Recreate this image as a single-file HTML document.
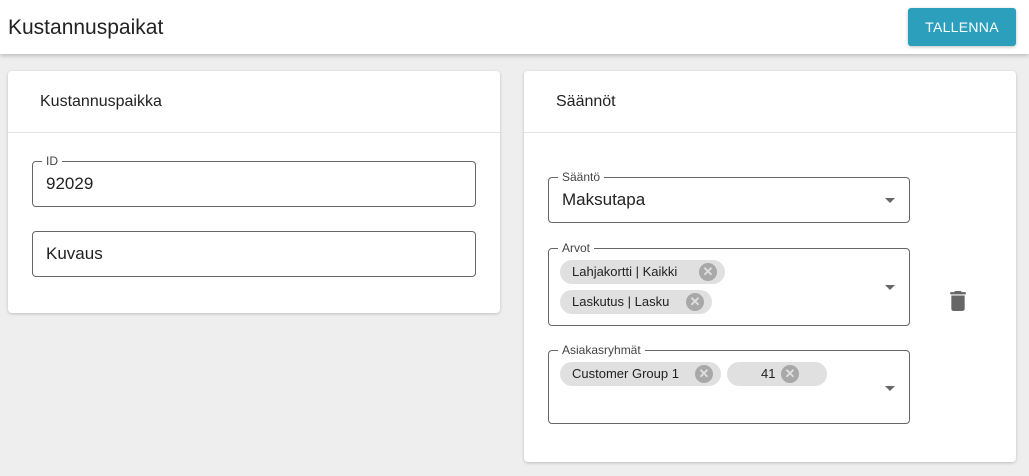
<!DOCTYPE html>
<html><head><meta charset="utf-8"><style>
*{box-sizing:border-box;margin:0;padding:0}
body{width:1029px;height:476px;background:#eeeeee;font-family:"Liberation Sans",sans-serif;color:#222;position:relative;overflow:hidden}
.hdr{position:absolute;left:0;top:0;width:1029px;height:54px;background:#fff;box-shadow:0 2px 4px rgba(0,0,0,.2)}
.title{position:absolute;left:8px;top:16px;font-size:21px;color:#222}
.btn{position:absolute;left:908px;top:8px;width:108px;height:38px;background:#2c9fbd;color:#fff;font-size:14px;line-height:38px;text-align:center;border-radius:3px;letter-spacing:.3px;box-shadow:0 1px 3px rgba(0,0,0,.25)}
.card{position:absolute;background:#fff;border-radius:4px;box-shadow:0 1px 3px rgba(0,0,0,.2)}
.ch{position:absolute;top:22px;font-size:16px;color:#222}
.div{position:absolute;left:0;right:0;top:61px;border-top:1px solid #e3e3e3}
.f{position:absolute;border:1px solid #666;border-radius:4px}
.lb{position:absolute;top:-9px;left:9px;background:#fff;padding:0 4px;font-size:12px;color:#444;line-height:16px}
.v{position:absolute;left:13px;font-size:17px;color:#222}
.arr{position:absolute;right:14px;width:0;height:0;border-left:5px solid transparent;border-right:5px solid transparent;border-top:5px solid #666}
.chip{position:absolute;height:24px;background:#e0e0e0;border-radius:12px;font-size:13px;line-height:24px;padding-left:12px;color:#222}
.x{position:absolute;top:3px;width:18px;height:18px;border-radius:9px;background:#a8a8a8;color:#e0e0e0;font-size:13px;line-height:18px;text-align:center;font-weight:bold}
</style></head><body>
<div class="hdr"><div class="title">Kustannuspaikat</div><div class="btn">TALLENNA</div></div>

<div class="card" style="left:8px;top:71px;width:492px;height:242px">
<div class="ch" style="left:32px">Kustannuspaikka</div><div class="div"></div>
<div class="f" style="left:24px;top:90px;width:444px;height:46px"><div class="lb">ID</div><div class="v" style="top:12px">92029</div></div>
<div class="f" style="left:24px;top:160px;width:444px;height:46px"><div class="v" style="top:12px">Kuvaus</div></div>
</div>

<div class="card" style="left:524px;top:71px;width:492px;height:391px">
<div class="ch" style="left:32px">Säännöt</div><div class="div"></div>
<div class="f" style="left:24px;top:106px;width:362px;height:46px"><div class="lb">Sääntö</div><div class="v" style="top:12px">Maksutapa</div><div class="arr" style="top:20px"></div></div>
<div class="f" style="left:24px;top:177px;width:362px;height:78px"><div class="lb">Arvot</div>
<div class="chip" style="left:11px;top:11px;width:165px">Lahjakortti | Kaikki<div class="x" style="left:139px">✕</div></div>
<div class="chip" style="left:11px;top:41px;width:152px">Laskutus | Lasku<div class="x" style="left:126px">✕</div></div>
<div class="arr" style="top:36px"></div></div>
<div class="f" style="left:24px;top:279px;width:362px;height:74px"><div class="lb">Asiakasryhmät</div>
<div class="chip" style="left:11px;top:11px;width:161px">Customer Group 1<div class="x" style="left:135px">✕</div></div>
<div class="chip" style="left:178px;top:11px;width:100px;padding-left:34px">41<div class="x" style="left:54px">✕</div></div>
<div class="arr" style="top:35px"></div></div>
<svg style="position:absolute;left:425px;top:220px" width="18" height="20" viewBox="0 0 14 18"><path d="M1 16c0 1.1.9 2 2 2h8c1.1 0 2-.9 2-2V4H1v12zM14 1h-3.5l-1-1h-5l-1 1H0v2h14V1z" fill="#666"/></svg>
</div>
</body></html>
